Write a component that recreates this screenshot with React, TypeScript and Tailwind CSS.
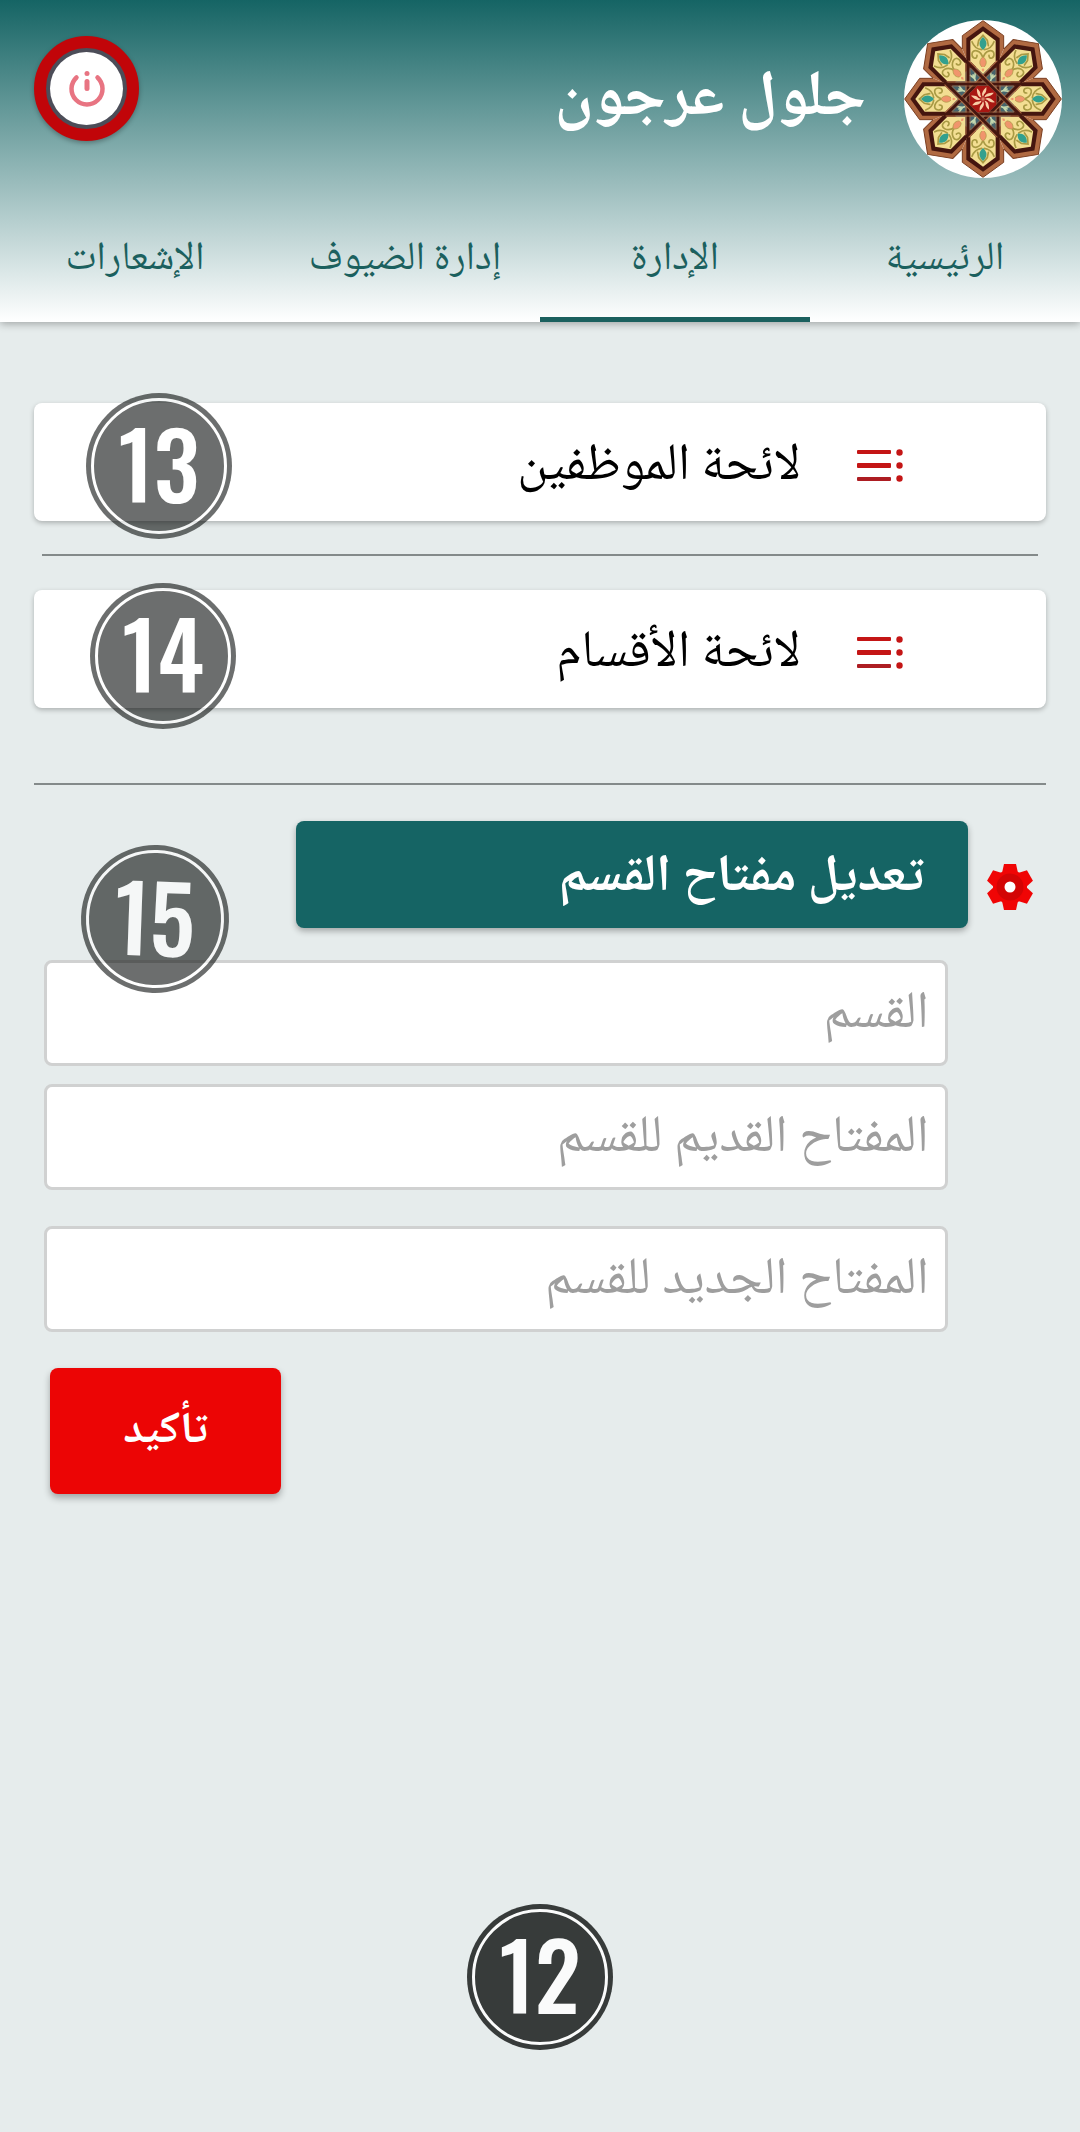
import React from "react";

const ARABIC = "font-['Noto_Naskh_Arabic','Noto_Sans_Arabic','Noto_Sans','DejaVu_Sans',sans-serif]";

const ANGLES = [0, 45, 90, 135, 180, 225, 270, 315];

function Petal({ angle }: { angle: number }) {
  return (
    <g transform={`rotate(${angle})`}>
      <path d="M0-235 62-190V-150L0 0-62-150V-190Z" fill="#b06a42" />
      <path d="M62-150V-190L0-235-62-190V-150" fill="none" stroke="#7b3f22" strokeWidth="3" />
      <path d="M0-218 50-182V-121L0 0-50-121V-182Z" fill="#45160f" />
      <path d="M0-203 38-175V-113L0-75-38-113V-175Z" fill="#f3de92" />
      <g fill="none" stroke="#a99a44" strokeWidth="5" strokeLinecap="round">
        <path d="M0-122C-6-148-33-152-33-134C-33-119-17-119-18-131" />
        <path d="M0-122C6-148 33-152 33-134C33-119 17-119 18-131" />
        <path d="M-4-148C-18-150-28-158-33-172M4-148C18-150 28-158 33-172" />
        <path d="M-16-160-13-176 0-191 13-176 16-160" />
      </g>
      <path d="M0-186C15-172 13-158 0-147C-13-158-15-172 0-186Z" fill="#32a08e" />
      <path d="M0-127C14-116 12-102 0-93C-12-102-14-116 0-127Z" fill="#f0956c" stroke="#a99a44" strokeWidth="2" />
    </g>
  );
}

function Rosette() {
  return (
    <svg viewBox="-237 -237 474 474" className="size-full" aria-hidden="true">
      {ANGLES.map((a) => (
        <Petal key={a} angle={a} />
      ))}
      <path d="M-39-94-94-39V39L-39 94H39L94 39V-39L39-94Z" fill="#45646c" />
      {ANGLES.map((a) => (
        <g key={a} transform={`rotate(${a})`}>
          <path d="M0-75 21-96H-21Z" fill="#f3de92" />
          <path d="M0-93 4-88 0-82-4-88Z" fill="#f0956c" />
        </g>
      ))}
      {ANGLES.map((a) => (
        <path
          key={a}
          transform={`rotate(${a + 22.5})`}
          d="M-9-82 0-66 9-82M0-80V-58"
          fill="none"
          stroke="#c2d6ae"
          strokeWidth="5"
        />
      ))}
      {[0, 45, 90, 135].map((a) => (
        <g key={a} transform={`rotate(${a})`}>
          <path d="M-45-118V118M45-118V118" stroke="#45160f" strokeWidth="9" />
          <path d="M-51-112V112M51-112V112" stroke="#b06a42" strokeWidth="3" />
          <path d="M-39-94V94M39-94V94" stroke="#b06a42" strokeWidth="2" />
        </g>
      ))}
      <path d="M-17-40-40-17V17L-17 40H17L40 17V-17L17-40Z" fill="#a81712" />
      {ANGLES.map((a) => (
        <path key={a} transform={`rotate(${a})`} d="M0-6C-6-15-2-24 10-36C11-25 9-19 3-14Z" fill="#f8cda6" />
      ))}
      <path d="M-6 0H6M0-6V6" stroke="#f8cda6" strokeWidth="2" />
    </svg>
  );
}

function PowerIcon() {
  return (
    <svg viewBox="0 0 36 36" className="size-9" fill="none" stroke="#e87482" strokeLinecap="round" aria-hidden="true">
      <path d="M7.5 6.500A15.500 15.500 0 1 0 28.500 6.500" strokeWidth="4.500" />
      <path d="M18 10.500V17.500" strokeWidth="5" />
      <circle cx="18" cy="2.500" r="2.500" fill="#e87482" stroke="none" />
    </svg>
  );
}

function ListIcon() {
  return (
    <svg viewBox="0 0 46 34" className="h-[34px] w-[46px]" fill="#c41515" aria-hidden="true">
      <rect x="0" y="1" width="34" height="4" rx="1" />
      <rect x="0" y="14" width="34" height="5" rx="1" />
      <rect x="0" y="28" width="34" height="4" rx="1" fill="#ad1d22" />
      <circle cx="42.500" cy="3.500" r="3.200" />
      <circle cx="42.500" cy="16.500" r="3.200" />
      <circle cx="42.500" cy="29.500" r="3.200" />
    </svg>
  );
}

function GearIcon() {
  return (
    <svg viewBox="-24 -24 48 48" className="size-12" aria-hidden="true">
      <g fill="#f00505">
        <circle r="17" />
        {[0, 60, 120, 180, 240, 300].map((a) => (
          <path key={a} transform={`rotate(${a})`} d="M-6-23H6L8-14H-8Z" />
        ))}
      </g>
      <circle r="13.500" fill="#d30505" />
      <circle r="5.500" fill="#fff" />
    </svg>
  );
}

function Badge({ n, className }: { n: number; className: string }) {
  return (
    <div
      className={`flex items-center justify-center rounded-full bg-[#0c0f0e] p-[5px] text-white ${className}`}
    >
      <div className="flex size-full items-center justify-center rounded-full border-3 border-white pb-2 font-['Oswald','Roboto_Condensed','Liberation_Sans_Narrow',sans-serif] text-[92px] leading-none font-medium">
        {n}
      </div>
    </div>
  );
}

function ListCard({ label, n, badge }: { label: string; n: number; badge: string }) {
  return (
    <div className="relative">
      <button
        type="button"
        className="flex h-[118px] w-full items-center gap-14 rounded-lg bg-white ps-[143px] pt-2 text-black shadow-[0_2px_5px_rgba(0,0,0,0.25)]"
      >
        <ListIcon />
        <span className="pt-1 text-[52px] leading-none">{label}</span>
      </button>
      <Badge n={n} className={`absolute size-[146px] opacity-60 ${badge}`} />
    </div>
  );
}

const TABS = ["الرئيسية", "الإدارة", "إدارة الضيوف", "الإشعارات"];

const FIELD =
  "h-[106px] w-full rounded-lg border-3 border-[#d0d1d1] bg-white px-4 pt-1 text-[52px] text-black placeholder:text-[#9e9e9e] placeholder:opacity-100";

export default function App() {
  return (
    <div dir="rtl" className={`flex min-h-screen flex-col bg-[#e6ecec] ${ARABIC}`}>
      <header className="bg-linear-to-b/srgb from-[#156464] to-white shadow-[0_2px_8px_rgba(0,0,0,0.3)]">
        <div className="flex h-[198px] items-start ps-[18px] pe-[34px] pt-5">
          <div className="size-[158px] shrink-0 overflow-hidden rounded-full bg-white">
            <Rosette />
          </div>
          <h1 className="ms-[38px] pt-[50px] text-[64px] leading-none font-bold text-white">جلول عرجون</h1>
          <button
            type="button"
            aria-label="تسجيل الخروج"
            className="ms-auto mt-4 flex size-[105px] shrink-0 items-center justify-center rounded-full border-12 border-[#c10509] bg-[#4c4d58] p-1 shadow-[0_2px_5px_rgba(0,0,0,0.3)]"
          >
            <span className="flex size-full items-center justify-center rounded-full bg-white">
              <PowerIcon />
            </span>
          </button>
        </div>
        <nav className="grid h-[124px] grid-cols-4 text-[40px] text-[#1b605e]">
          {TABS.map((t, i) => (
            <a
              key={t}
              href="#"
              aria-current={i === 1 ? "page" : undefined}
              className={`flex items-center justify-center border-b-5 pt-1 ${i === 1 ? "border-[#1b605e]" : "border-transparent"}`}
            >
              {t}
            </a>
          ))}
        </nav>
      </header>

      <main className="flex flex-col px-[34px] pt-[81px]">
        <ListCard label="لائحة الموظفين" n={13} badge="left-[52px] -top-[10px]" />
        <hr className="mx-2 mt-[33px] mb-[34px] border-t-2 border-[#848a8a]" />
        <ListCard label="لائحة الأقسام" n={14} badge="left-[56px] -top-[7px]" />
        <hr className="mt-[75px] border-t-2 border-[#848a8a]" />

        <section className="relative pt-9">
          <div className="flex items-center gap-[18px] ps-[12px]">
            <div className="pt-6">
              <GearIcon />
            </div>
            <h2 className="flex h-[107px] w-[672px] items-center rounded-lg bg-[#156464] px-11 pt-2 text-[52px] font-bold text-white shadow-[0_3px_6px_rgba(0,0,0,0.3)]">
              تعديل مفتاح القسم
            </h2>
          </div>
          <form className="mt-8 flex flex-col ps-[98px] pe-[10px]" onSubmit={(e) => e.preventDefault()}>
            <input className={FIELD} aria-label="القسم" placeholder="القسم" />
            <input className={`mt-[18px] ${FIELD}`} aria-label="المفتاح القديم للقسم" placeholder="المفتاح القديم للقسم" />
            <input className={`mt-9 ${FIELD}`} aria-label="المفتاح الجديد للقسم" placeholder="المفتاح الجديد للقسم" />
            <button
              type="submit"
              className="me-[6px] mt-9 h-[126px] w-[231px] self-end rounded-lg bg-[#ec0505] pt-1 text-[44px] font-bold text-white shadow-[0_4px_7px_rgba(0,0,0,0.3)]"
            >
              تأكيد
            </button>
          </form>
          <Badge n={15} className="absolute top-[60px] left-[47px] size-[148px] rotate-2 opacity-60" />
        </section>
      </main>

      <footer className="mt-auto flex justify-center pb-[82px]">
        <Badge n={12} className="size-[146px] opacity-80" />
      </footer>
    </div>
  );
}
